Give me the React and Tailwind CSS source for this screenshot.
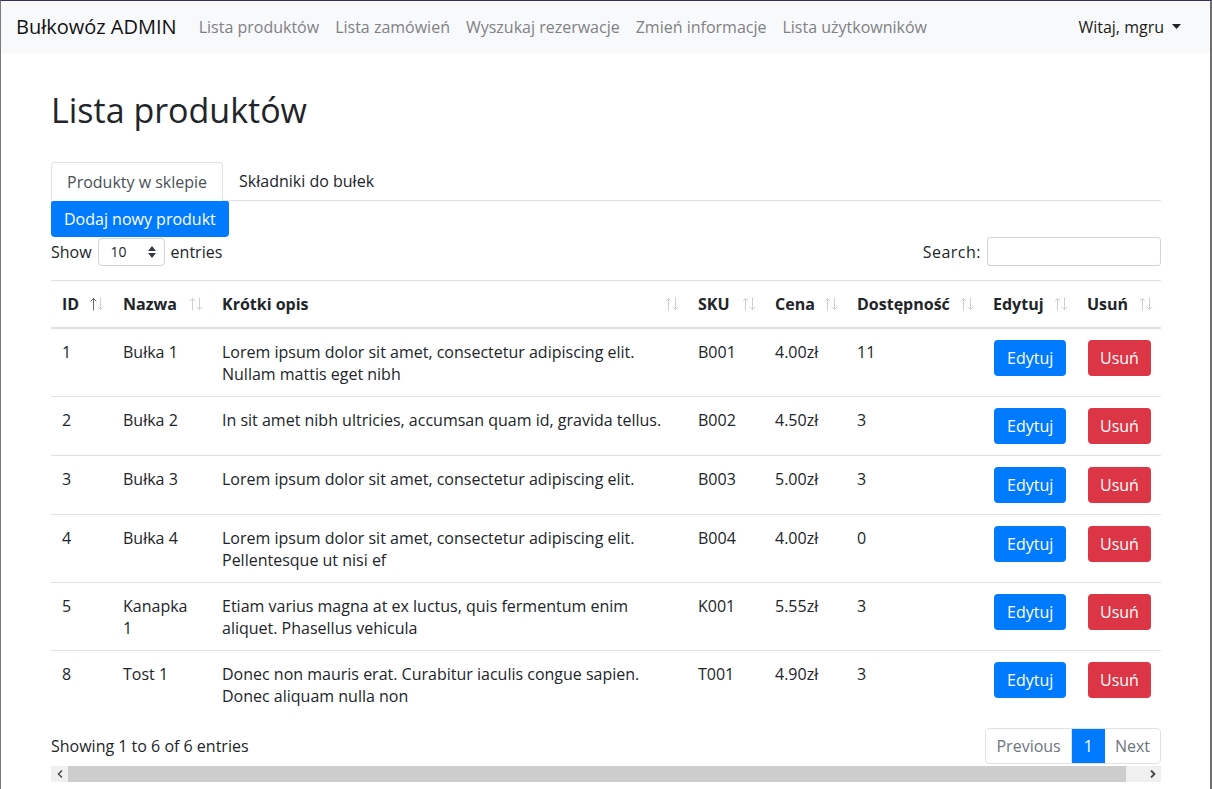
import React from "react";

const rows = [
  { id: "1", name: "Bułka 1", desc: "Lorem ipsum dolor sit amet, consectetur adipiscing elit. Nullam mattis eget nibh", sku: "B001", price: "4.00zł", qty: "11" },
  { id: "2", name: "Bułka 2", desc: "In sit amet nibh ultricies, accumsan quam id, gravida tellus.", sku: "B002", price: "4.50zł", qty: "3" },
  { id: "3", name: "Bułka 3", desc: "Lorem ipsum dolor sit amet, consectetur adipiscing elit.", sku: "B003", price: "5.00zł", qty: "3" },
  { id: "4", name: "Bułka 4", desc: "Lorem ipsum dolor sit amet, consectetur adipiscing elit. Pellentesque ut nisi ef", sku: "B004", price: "4.00zł", qty: "0" },
  { id: "5", name: "Kanapka 1", desc: "Etiam varius magna at ex luctus, quis fermentum enim aliquet. Phasellus vehicula", sku: "K001", price: "5.55zł", qty: "3" },
  { id: "8", name: "Tost 1", desc: "Donec non mauris erat. Curabitur iaculis congue sapien. Donec aliquam nulla non", sku: "T001", price: "4.90zł", qty: "3" },
];

const columns = [
  { label: "ID", w: "w-[61px]", active: true },
  { label: "Nazwa", w: "w-[99px]" },
  { label: "Krótki opis", w: "w-[476px]" },
  { label: "SKU", w: "w-[77px]" },
  { label: "Cena", w: "w-[82px]" },
  { label: "Dostępność", w: "w-[136px]" },
  { label: "Edytuj", w: "w-[94px]" },
  { label: "Usuń", w: "w-[85px]" },
];

// little up/down sort arrows shown in DataTables headers
const SortIcon = ({ active }) => (
  <svg width="16" height="16" viewBox="0 0 16 16" className="shrink-0">
    <g fill="none" strokeWidth="1" strokeLinecap="round">
      <path d="M4.5 14V2.5M2 5l2.5-2.5L7 5" stroke={active ? "#6b6b6b" : "#cfcfcf"} />
      <path d="M11.5 2v11.5M9 11l2.5 2.5L14 11" stroke="#cfcfcf" />
    </g>
  </svg>
);

const navLinks = ["Lista produktów", "Lista zamówień", "Wyszukaj rezerwacje", "Zmień informacje", "Lista użytkowników"];

export default function App() {
  return (
    <div
      className="min-h-[789px] w-[1212px] bg-white border-t border-t-[#3b2f6b] border-l border-l-[#7a7a7a] border-r-2 border-r-[#6e6e6e] text-[16px] text-[#212529]"
      style={{ fontFamily: '"Open Sans", "Liberation Sans", sans-serif' }}
    >
      {/* Navbar */}
      <nav className="h-[52px] bg-[#f8f9fa] flex items-center pl-[15px] pr-[29px]">
        <span className="text-[20px] text-[#111] mr-[22px]">Bułkowóz ADMIN</span>
        <div className="flex items-center gap-[16px] text-[#7f8184]">
          {navLinks.map((l) => (
            <span key={l}>{l}</span>
          ))}
        </div>
        <div className="ml-auto flex items-center gap-[8px] text-[#1b1b1b]">
          <span>Witaj, mgru</span>
          <svg width="9" height="6" viewBox="0 0 9 6">
            <path d="M0 0h9L4.5 5z" fill="#222" />
          </svg>
        </div>
      </nav>

      <div className="mx-[50px] w-[1110px]">
        <h1 className="pt-[33px] text-[34px] leading-[48px] font-normal text-[#212529]">Lista produktów</h1>

        {/* Tabs */}
        <div className="mt-[28px] flex border-b border-[#dee2e6]">
          <div className="px-[15px] h-[39px] flex items-center border border-[#dee2e6] border-b-white -mb-px rounded-t-[4px] bg-white text-[#495057]">
            Produkty w sklepie
          </div>
          <div className="px-[16px] h-[38px] flex items-center text-[#212529]">Składniki do bułek</div>
        </div>

        <button className="h-[36px] px-[13px] bg-[#007bff] text-white rounded-b-[4px] rounded-t-[2px]">
          Dodaj nowy produkt
        </button>

        {/* Show / search */}
        <div className="flex items-center justify-between h-[29px]">
          <div className="flex items-center gap-[6px]">
            <span>Show</span>
            <div className="w-[67px] h-[28px] border border-[#ced4da] rounded-[4px] flex items-center justify-between pl-[12px] pr-[8px] text-[14px]">
              <span>10</span>
              <svg width="8" height="12" viewBox="0 0 8 12">
                <path d="M0 5h8L4 0zM0 7h8l-4 5z" fill="#343a40" />
              </svg>
            </div>
            <span>entries</span>
          </div>
          <div className="flex items-center gap-[6px]">
            <span className="tracking-[0.5px]">Search:</span>
            <div className="w-[174px] h-[29px] border border-[#ced4da] rounded-[3px]" />
          </div>
        </div>

        {/* Table */}
        <table className="mt-[14px] w-[1110px] table-fixed border-collapse">
          <thead>
            <tr className="border-t border-[#dee2e6] border-b-2 border-b-[#dee2e6]">
              {columns.map((c) => (
                <th key={c.label} className={`${c.w} pl-[11px] pr-[7px] py-[12px] text-left font-bold leading-[22px]`}>
                  <div className="flex items-center justify-between">
                    <span className="whitespace-nowrap">{c.label}</span>
                    <SortIcon active={c.active} />
                  </div>
                </th>
              ))}
            </tr>
          </thead>
          <tbody>
            {rows.map((r) => (
              <tr key={r.id} className="border-b border-[#dee2e6] last:border-b-0 align-top leading-[22px]">
                <td className="pl-[11px] pt-[12px] pb-[11px]">{r.id}</td>
                <td className="pl-[11px] pr-[18px] pt-[12px] pb-[11px]">{r.name}</td>
                <td className="pl-[11px] pr-[20px] pt-[12px] pb-[11px]">{r.desc}</td>
                <td className="pl-[11px] pt-[12px] pb-[11px]">{r.sku}</td>
                <td className="pl-[11px] pt-[12px] pb-[11px]">{r.price}</td>
                <td className="pl-[11px] pt-[12px] pb-[11px]">{r.qty}</td>
                <td className="pl-[12px] py-[11px]">
                  <span className="inline-flex items-center h-[36px] px-[13px] bg-[#007bff] text-white rounded-[4px]">Edytuj</span>
                </td>
                <td className="pl-[12px] py-[11px]">
                  <span className="inline-flex items-center h-[36px] px-[12px] bg-[#dc3545] text-white rounded-[4px]">Usuń</span>
                </td>
              </tr>
            ))}
          </tbody>
        </table>

        {/* Footer: info + pagination */}
        <div className="mt-[10px] flex items-center justify-between">
          <span>Showing 1 to 6 of 6 entries</span>
          <div className="flex h-[36px] border border-[#dee2e6] rounded-[4px] text-[#6c757d]">
            <span className="flex items-center px-[10px] border-r border-[#dee2e6]">Previous</span>
            <span className="flex items-center px-[12px] bg-[#007bff] text-white">1</span>
            <span className="flex items-center px-[10px]">Next</span>
          </div>
        </div>

        {/* horizontal scrollbar */}
        <div className="mt-[2px] h-[16px] flex bg-[#f0f0f0]">
          <div className="w-[17px] flex items-center justify-center">
            <svg width="6" height="8" viewBox="0 0 6 8"><path d="M5 0.5L1.5 4 5 7.5" stroke="#555" strokeWidth="1.6" fill="none" /></svg>
          </div>
          <div className="w-[1058px] bg-[#cdcdcd]" />
          <div className="flex-1 flex items-center justify-end pr-[5px]">
            <svg width="6" height="8" viewBox="0 0 6 8"><path d="M1 0.5L4.5 4 1 7.5" stroke="#444" strokeWidth="1.8" fill="none" /></svg>
          </div>
        </div>
      </div>
    </div>
  );
}
